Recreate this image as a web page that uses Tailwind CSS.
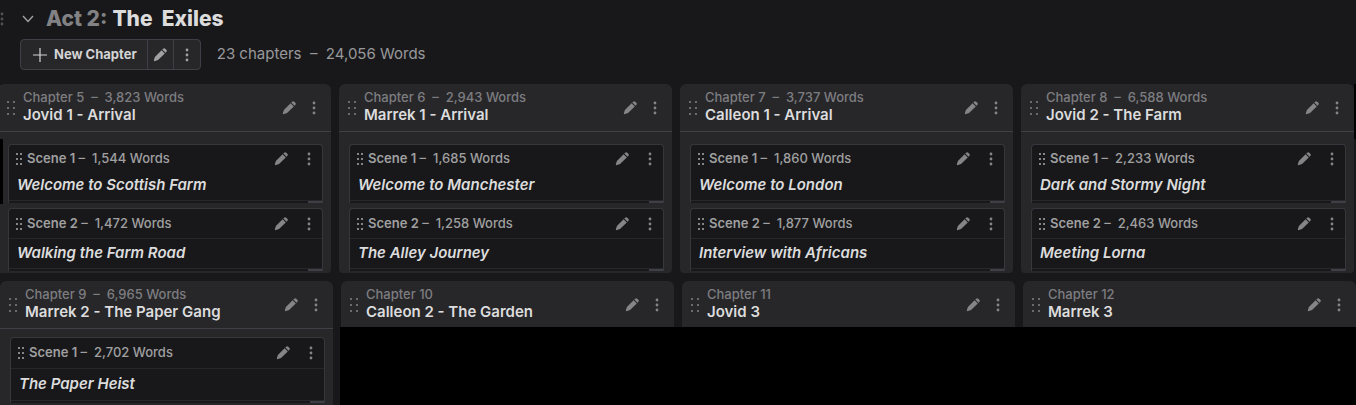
<!DOCTYPE html>
<html lang="en">
<head>
  <meta charset="UTF-8" />
  <meta name="viewport" content="width=device-width, initial-scale=1.0"/>
  <title>Act 2: The Exiles</title>
  <script src="https://cdn.jsdelivr.net/npm/@tailwindcss/browser@4"></script>
</head>
<body class="flex flex-col min-h-screen overflow-x-hidden bg-[#18181b] text-neutral-300 font-['Inter',sans-serif]">

  <svg class="hidden">
    <symbol id="pencil" viewBox="0 0 14 14">
      <path d="M8.6 2.2 11.8 5.4 5 12.1 2 13.1Q.6 13.4.9 12L1.9 9z M9.3 1.5l.8-.8a1.5 1.5 0 0 1 2.1 0l1.1 1.1a1.5 1.5 0 0 1 0 2.1l-.8.8z" fill="currentColor"/>
    </symbol>
    <symbol id="dots" viewBox="0 0 4 14">
      <g fill="currentColor"><circle cx="2" cy="2" r="1.4"/><circle cx="2" cy="7" r="1.4"/><circle cx="2" cy="12" r="1.4"/></g>
    </symbol>
    <symbol id="grip" viewBox="0 0 8 14">
      <path d="M0 0h2v2H0zM6 0h2v2H6zM0 6h2v2H0zM6 6h2v2H6zM0 12h2v2H0zM6 12h2v2H6z" fill="currentColor"/>
    </symbol>
    <symbol id="grip-small" viewBox="0 0 6 12">
      <path d="M0 0h2v2H0zM4 0h2v2H4zM0 5h2v2H0zM4 5h2v2H4zM0 10h2v2H0zM4 10h2v2H4z" fill="currentColor"/>
    </symbol>
  </svg>

  <header class="pt-[7px] pb-[14px]">
    <div class="flex items-center h-6">
      <svg class="w-1 h-3.5 text-neutral-600"><use href="#dots"/></svg>
      <button aria-label="Collapse act" class="ml-4 w-4 h-4 flex items-center justify-center text-neutral-400">
        <svg class="w-3 h-2" viewBox="0 0 12 8" fill="none" stroke="currentColor" stroke-width="1.4"><path d="M1 1l5 5.5L11 1"/></svg>
      </button>
      <h1 class="ml-2.5 flex gap-[5px] text-[21px] leading-6 font-extrabold text-[#dcdcdc]">
        <span class="text-[#828284]">Act 2:</span><span>The&nbsp; Exiles</span>
      </h1>
    </div>
    <div class="flex items-center mt-2 ml-5">
      <div class="flex h-[31px] rounded-sm border border-zinc-700 bg-[#27272a] divide-x divide-zinc-700">
        <button class="flex items-center gap-[7px] pl-3 pr-2.5 text-[13px] font-bold text-neutral-300">
          <svg class="w-3.5 h-3.5" viewBox="0 0 14 14" stroke="currentColor" stroke-width="1.2"><path d="M7 0v14M0 7h14"/></svg>
          New Chapter
        </button>
        <button aria-label="Edit act" class="w-[26px] flex items-center justify-center text-neutral-400"><svg class="w-3.5 h-3.5"><use href="#pencil"/></svg></button>
        <button aria-label="Act menu" class="w-[26px] flex items-center justify-center text-neutral-400"><svg class="w-1 h-3.5"><use href="#dots"/></svg></button>
      </div>
      <p class="ml-4 text-[15px] text-[#98989a]">23 chapters &nbsp;–&nbsp; 24,056 Words</p>
    </div>
  </header>

  <main class="relative flex flex-col grow gap-2">
    <section id="rowOne" class="grid grid-cols-4 gap-x-2 -ml-0.5 mr-0.5"></section>
    <section class="grid grid-cols-4 grid-rows-[46px_1fr] gap-x-2 grow">
      <div id="rowTwo" class="contents"></div>
      <div class="col-start-2 col-span-3 row-start-2 -ml-px bg-black"></div>
    </section>
    <div class="absolute left-0 top-[55px] w-[3px] h-[65px] bg-black"></div>
    <div class="absolute right-0 top-0 w-0.5 h-[55px] bg-black"></div>
  </main>

  <script>
    const rowOne = [
      { no: 5, words: '3,823', title: 'Jovid 1 - Arrival', scenes: [['1,544', 'Welcome to Scottish Farm'], ['1,472', 'Walking the Farm Road']] },
      { no: 6, words: '2,943', title: 'Marrek 1 - Arrival', scenes: [['1,685', 'Welcome to Manchester'], ['1,258', 'The Alley Journey']] },
      { no: 7, words: '3,737', title: 'Calleon 1 - Arrival', scenes: [['1,860', 'Welcome to London'], ['1,877', 'Interview with Africans']] },
      { no: 8, words: '6,588', title: 'Jovid 2 - The Farm', scenes: [['2,233', 'Dark and Stormy Night'], ['2,463', 'Meeting Lorna']] }
    ];
    const rowTwo = [
      { no: 9, words: '6,965', title: 'Marrek 2 - The Paper Gang', scenes: [['2,702', 'The Paper Heist']] },
      { no: 10, title: 'Calleon 2 - The Garden' },
      { no: 11, title: 'Jovid 3' },
      { no: 12, title: 'Marrek 3' }
    ];

    function actions(name, gap) {
      return `
        <div class="flex items-center ${gap} text-[#858587]">
          <button aria-label="Edit ${name}" class="w-3.5 h-3.5"><svg class="w-3.5 h-3.5"><use href="#pencil"/></svg></button>
          <button aria-label="${name} menu" class="w-1 h-3.5"><svg class="w-1 h-3.5"><use href="#dots"/></svg></button>
        </div>`;
    }

    // tight: first scene sits closer and has no divider; tall: roomier rows
    const sizes = {
      tight: { head: 'h-7', title: 'h-[25px] mb-0.5' },
      normal: { head: 'h-[30px] border-b border-zinc-800', title: 'h-[29px]' },
      tall: { head: 'h-[31px] border-b border-zinc-800', title: 'h-[31px]' }
    };

    function scene([words, title], i, size) {
      const s = sizes[size];
      return `
        <article class="rounded-t-sm border border-zinc-700/80 border-b-0 bg-[#18181b]">
          <div class="flex items-center pl-[7px] pr-[11px] ${s.head}">
            <svg class="w-1.5 h-3 text-[#858587]"><use href="#grip-small"/></svg>
            <p class="grow ml-[5px] text-[13px] font-medium text-[#a0a0a0]"><span class="font-semibold">Scene ${i + 1}</span> –&nbsp; ${words} Words</p>
            ${actions('scene', 'gap-[19px]')}
          </div>
          <h3 class="flex items-center pl-2 text-[15px] font-semibold italic text-[#dcdcdc] ${s.title}">${title}</h3>
          <div class="flex justify-end h-[3px] border-t border-zinc-800"><div class="w-3.5 bg-zinc-700"></div></div>
        </article>`;
    }

    function chapter(c, extra, size) {
      const body = c.scenes ? `
        <div class="flex flex-col gap-[5px] pl-[10px] pr-2 pb-0.5 ${size === 'tall' ? 'pt-2' : 'pt-3'}">
          ${c.scenes.map((s, i) => scene(s, i, size || (i ? 'normal' : 'tight'))).join('')}
        </div>` : '';
      return `
        <article class="rounded-t-md bg-[#27272a] ${extra}">
          <div class="flex items-center pl-[9px] pr-[15px] h-12 ${c.scenes ? 'border-b border-zinc-700' : ''}">
            <svg class="w-2 h-3.5 text-[#6b6b6d]"><use href="#grip"/></svg>
            <div class="grow ml-2 pb-0.5">
              <p class="text-[13px] leading-4 font-medium text-[#7d7d80]">Chapter ${c.no}${c.words ? ` &nbsp;–&nbsp; ${c.words} Words` : ''}</p>
              <h2 class="text-[15px] leading-5 font-semibold text-[#dcdcdc]">${c.title}</h2>
            </div>
            ${actions('chapter', 'gap-4')}
          </div>
          ${body}
        </article>`;
    }

    document.getElementById('rowOne').innerHTML = rowOne.map(c => chapter(c, 'rounded-b-sm')).join('');
    document.getElementById('rowTwo').innerHTML = rowTwo.map(c => c.scenes
      ? chapter(c, 'row-span-2', 'tall')
      : chapter(c, 'overflow-hidden')).join('');
  </script>
</body>
</html>
